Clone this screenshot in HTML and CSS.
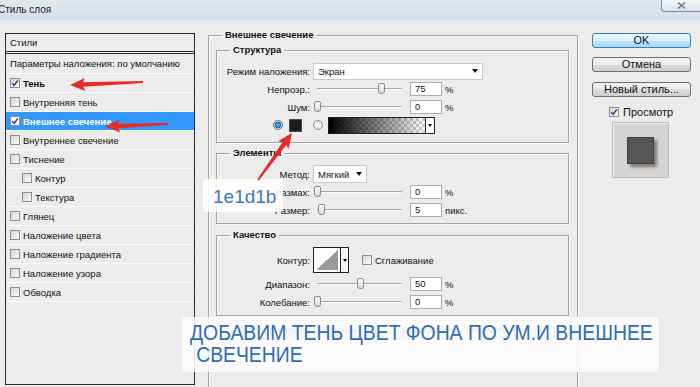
FILE: index.html
```html
<!DOCTYPE html>
<html lang="ru">
<head>
    <meta charset="UTF-8">
    <meta name="viewport" content="width=device-width, initial-scale=1.0">
    <title>Стиль слоя</title>
    <link rel="stylesheet" href="styles.css">
</head>
<body>

<div class="dialog">
    <div class="titlebar">
        <span class="title">Стиль слоя</span>
        <span class="close-btn">
            <svg viewBox="0 0 9 7"><path d="M1 0.5 8 6.5M8 0.5 1 6.5" stroke="#5f6a78" stroke-width="1.3" fill="none"/></svg>
        </span>
    </div>

    <div class="main">
        <!-- list of layer styles -->
        <div class="styles-list">
            <div class="list-head">Стили</div>
            <div class="list-row params">Параметры наложения: по умолчанию</div>
            <div class="list-row checked"><span class="cb"><svg viewBox="0 0 8 8"><path d="M1.2 4.2 3.2 6.3 6.9 1.4"/></svg></span>Тень</div>
            <div class="list-row"><span class="cb"></span>Внутренняя тень</div>
            <div class="list-row checked selected"><span class="cb"><svg viewBox="0 0 8 8"><path d="M1.2 4.2 3.2 6.3 6.9 1.4"/></svg></span>Внешнее свечение</div>
            <div class="list-row"><span class="cb"></span>Внутреннее свечение</div>
            <div class="list-row"><span class="cb"></span>Тиснение</div>
            <div class="list-row sub"><span class="cb"></span>Контур</div>
            <div class="list-row sub"><span class="cb"></span>Текстура</div>
            <div class="list-row"><span class="cb"></span>Глянец</div>
            <div class="list-row"><span class="cb"></span>Наложение цвета</div>
            <div class="list-row"><span class="cb"></span>Наложение градиента</div>
            <div class="list-row"><span class="cb"></span>Наложение узора</div>
            <div class="list-row"><span class="cb"></span>Обводка</div>
        </div>

        <!-- settings of the selected style -->
        <div class="settings">
            <fieldset class="group outer">
                <legend>Внешнее свечение</legend>

                <fieldset class="group">
                    <legend>Структура</legend>
                    <div class="row">
                        <span class="lbl">Режим наложения:</span>
                        <div class="select wide">Экран<i class="tri"></i></div>
                    </div>
                    <div class="row">
                        <span class="lbl">Непрозр.:</span>
                        <div class="slider"><span class="thumb" style="left: 75%"></span></div>
                        <span class="num">75</span><span class="unit">%</span>
                    </div>
                    <div class="row">
                        <span class="lbl">Шум:</span>
                        <div class="slider"><span class="thumb" style="left: 0%"></span></div>
                        <span class="num">0</span><span class="unit">%</span>
                    </div>
                    <div class="row color">
                        <span class="radio on"></span>
                        <span class="swatch"></span>
                        <span class="radio"></span>
                        <div class="grad"><span class="grad-fill"></span><span class="grad-drop"><i class="tri sm"></i></span></div>
                    </div>
                </fieldset>

                <fieldset class="group elements">
                    <legend>Элементы</legend>
                    <div class="row">
                        <span class="lbl">Метод:</span>
                        <div class="select short">Мягкий<i class="tri"></i></div>
                    </div>
                    <div class="row">
                        <span class="lbl">Размах:</span>
                        <div class="slider"><span class="thumb" style="left: 0%"></span></div>
                        <span class="num">0</span><span class="unit">%</span>
                    </div>
                    <div class="row">
                        <span class="lbl">Размер:</span>
                        <div class="slider"><span class="thumb" style="left: 5%"></span></div>
                        <span class="num">5</span><span class="unit">пикс.</span>
                    </div>
                </fieldset>

                <fieldset class="group quality">
                    <legend>Качество</legend>
                    <div class="row tall">
                        <span class="lbl">Контур:</span>
                        <div class="contour"><span class="contour-shape"></span><span class="contour-drop"><i class="tri sm"></i></span></div>
                        <label class="smooth"><span class="cb"></span>Сглаживание</label>
                    </div>
                    <div class="row">
                        <span class="lbl">Диапазон:</span>
                        <div class="slider"><span class="thumb" style="left: 50%"></span></div>
                        <span class="num">50</span><span class="unit">%</span>
                    </div>
                    <div class="row">
                        <span class="lbl">Колебание:</span>
                        <div class="slider"><span class="thumb" style="left: 0%"></span></div>
                        <span class="num">0</span><span class="unit">%</span>
                    </div>
                </fieldset>

                <div class="defaults">
                    <button class="ghost first">Использовать по умолчанию</button>
                    <button class="ghost second">Восстановить по умолчанию</button>
                </div>
            </fieldset>
        </div>

        <!-- dialog buttons -->
        <div class="side">
            <button class="btn primary">OK</button>
            <button class="btn cancel">Отмена</button>
            <button class="btn new-style">Новый стиль...</button>
            <label class="preview-check"><span class="cb"><svg viewBox="0 0 8 8"><path d="M1.2 4.2 3.2 6.3 6.9 1.4"/></svg></span>Просмотр</label>
            <div class="preview"><span class="preview-swatch"></span></div>
        </div>
    </div>

    <!-- annotations on top of the screenshot -->
    <div class="hex-note">1e1d1b</div>
    <div class="caption">
        <span>ДОБАВИМ ТЕНЬ ЦВЕТ ФОНА ПО УМ.И ВНЕШНЕЕ</span>
        <span class="indent">СВЕЧЕНИЕ</span>
    </div>
    <svg class="arrows" width="700" height="387" viewBox="0 0 700 387">
        <polygon transform="translate(143 82) rotate(177.6)" points="0,-1 60,-2.3 58,-6.5 73,0 58,6.5 60,2.3 0,1"/>
        <polygon transform="translate(168 124) rotate(177.7)" points="0,-1 50,-2.3 48,-6.5 63,0 48,6.5 50,2.3 0,1"/>
        <polygon transform="translate(258 180) rotate(-54.1)" points="0,-1 45,-2.3 43,-6.5 58,0 43,6.5 45,2.3 0,1"/>
    </svg>
</div>

</body>
</html>
```

FILE: styles.css
```css
* {
    box-sizing: border-box;
}
body {
    margin: 0;
    width: 700px;
    height: 387px;
    overflow: hidden;
    background-color: #ececec;
    font-family: "Liberation Sans", Arial, sans-serif;
    font-size: 9.5px;
    color: #111;
}
.dialog {
    position: relative;
    height: 387px;
    overflow: hidden;
}

/* title bar */
.titlebar {
    height: 20px;
    display: flex;
    align-items: flex-start;
    background: linear-gradient(#e0e8f1, #d5dfea);
}
.title {
    margin: 4px 0 0 -2px;
    font-size: 10px;
    line-height: 11px;
    color: #1b1b1b;
}
.close-btn {
    margin-left: auto;
    width: 39px;
    height: 12px;
    border: 1px solid #7f8b9a;
    border-top: 0;
    border-right: 0;
    border-radius: 0 0 0 4px;
    background: linear-gradient(#f3f6f9, #dbe2ea);
    display: flex;
    justify-content: center;
    align-items: center;
}
.close-btn svg {
    width: 9px;
    height: 7px;
}

.main {
    display: flex;
    align-items: flex-start;
    padding-top: 13px;
}

/* checkbox */
.cb {
    width: 10px;
    height: 10px;
    flex: none;
    border: 1px solid #8e8f8f;
    background: linear-gradient(135deg, #d6d6d6, #f9f9f9);
    display: flex;
    align-items: center;
    justify-content: center;
}
.cb svg {
    width: 8px;
    height: 8px;
}
.cb path {
    fill: none;
    stroke: #2f3f8c;
    stroke-width: 1.5;
}

/* styles list */
.styles-list {
    margin-left: 5px;
    width: 190px;
    height: 352px;
    border: 1px solid #2a2a2a;
    flex: none;
}
.list-head {
    height: 20px;
    padding-left: 4px;
    line-height: 17px;
    border-bottom: 3px double #2a2a2a;
}
.list-row {
    display: flex;
    align-items: center;
    gap: 3px;
    height: 19px;
    padding-left: 4px;
    border-bottom: 1px solid #fbfbfb;
    white-space: nowrap;
}
.list-row.params {
    height: 20px;
}
.list-row.sub {
    padding-left: 16px;
}
.list-row.checked {
    font-weight: bold;
}
.list-row.selected {
    background-color: #3399ff;
    color: #fff;
}
.list-row.selected .cb {
    background: #fff;
}

/* settings */
.settings {
    margin-left: 13px;
    margin-top: -4px;
    flex: none;
}
fieldset.group {
    margin: 0;
    min-width: 0;
    border: 1px solid #a5a5a5;
    box-shadow: inset 1px 1px 0 #fafafa, 1px 1px 0 #fafafa;
    padding: 6px 0 8px;
}
.group legend {
    padding: 0 3px;
    margin-left: 13px;
    font-weight: bold;
    line-height: 12px;
}
fieldset.outer {
    width: 370px;
    height: 358px;
    padding: 3px 8px 0 7px;
    border-bottom: 0;
}
.outer > legend {
    margin-left: 6px;
}
fieldset.elements {
    margin-top: 4px;
    padding-bottom: 4px;
}
fieldset.quality {
    margin-top: 5px;
    padding-bottom: 4px;
}

.row {
    display: flex;
    align-items: center;
    height: 18px;
}
.row.tall {
    height: 26px;
    margin-bottom: 2px;
}
.row.color {
    padding-left: 56px;
}
.lbl {
    width: 93px;
    margin-right: 3px;
    text-align: right;
    flex: none;
    white-space: nowrap;
}
.select {
    height: 17px;
    background: #fff;
    border: 1px solid #c9c9c9;
    display: flex;
    align-items: center;
    justify-content: space-between;
    padding: 0 4px;
}
.select.wide {
    width: 170px;
}
.select.short {
    width: 54px;
    height: 18px;
}
.tri {
    width: 0;
    height: 0;
    border-left: 3.5px solid transparent;
    border-right: 3.5px solid transparent;
    border-top: 4px solid #111;
}
.tri.sm {
    border-left-width: 2.5px;
    border-right-width: 2.5px;
    border-top-width: 3px;
}
.slider {
    position: relative;
    width: 85px;
    height: 2px;
    margin: 0 8px 0 4px;
    border-top: 1px solid #a6a6a6;
    border-bottom: 1px solid #fdfdfd;
    flex: none;
}
.thumb {
    position: absolute;
    top: -6px;
    width: 7px;
    height: 11px;
    margin-left: -3px;
    border: 1px solid #8b8b8b;
    border-radius: 2px 2px 3px 3px;
    background: linear-gradient(#fdfdfd, #d9d9d9);
}
.num {
    width: 32px;
    height: 14px;
    border: 1px solid #abadb3;
    background: #fff;
    padding-left: 4px;
    line-height: 12px;
    flex: none;
}
.unit {
    margin-left: 3px;
}

.radio {
    width: 10px;
    height: 10px;
    border-radius: 50%;
    border: 1px solid #8e8f8f;
    background: radial-gradient(circle, #fdfdfd, #d8d8d8);
    flex: none;
    margin-right: 5px;
}
.radio.on {
    margin-right: 6px;
    border-color: #5a6f87;
    background: radial-gradient(circle, #59c2fb 0, #1c7ccc 2.5px, #114d88 3px, #e9e9e9 3.6px);
}
.swatch {
    width: 13px;
    height: 13px;
    margin-right: 11px;
    background: #1e1d1b;
    border: 1px solid #4a4a4a;
    flex: none;
}
.grad {
    width: 107px;
    height: 17px;
    border: 1px solid #222;
    display: flex;
}
.grad-fill {
    flex: 1;
    background: linear-gradient(to right, #000, rgba(0, 0, 0, 0)),
                repeating-conic-gradient(#cfcfcf 0 25%, #fff 0 50%) 0 0 / 6px 6px;
}
.grad-drop {
    width: 9px;
    border-left: 1px solid #222;
    background: #fff;
    display: flex;
    align-items: center;
    justify-content: center;
}

.contour {
    width: 36px;
    height: 26px;
    border: 1px solid #222;
    display: flex;
    background: #fff;
}
.contour-shape {
    flex: 1;
    margin: 2px;
    background: linear-gradient(to bottom right, #fff 50%, #9a9a9a 50%);
}
.contour-drop {
    width: 8px;
    border-left: 1px solid #222;
    background: #f3f3f3;
    display: flex;
    align-items: center;
    justify-content: center;
}
.smooth {
    margin-left: 13px;
    display: flex;
    align-items: center;
    gap: 3px;
}

.defaults {
    display: flex;
    gap: 6px;
    margin: 4px 0 0 14px;
}
.ghost {
    height: 18px;
    padding: 0;
    border: 1px solid #adadad;
    border-radius: 3px;
    background: linear-gradient(#f6f6f6, #e1e1e1);
    font: inherit;
    color: #555;
}
.ghost.first {
    width: 139px;
}
.ghost.second {
    width: 180px;
}

/* right column */
.side {
    margin-left: 14px;
    width: 99px;
    display: flex;
    flex-direction: column;
    flex: none;
}
.btn {
    height: 15px;
    padding: 0;
    border: 1px solid #707070;
    border-radius: 3px;
    background: linear-gradient(#f2f2f2, #ebebeb 50%, #dddddd 50%, #cfcfcf);
    font-family: "Liberation Sans", Arial, sans-serif;
    font-size: 11px;
    line-height: 13px;
    color: #111;
}
.btn.primary {
    border-color: #3c7fb1;
    background: linear-gradient(#eaf6fd, #d9f0fc 50%, #bee6fd 50%, #a7d9f5);
}
.btn.cancel {
    margin-top: 9px;
}
.btn.new-style {
    margin-top: 10px;
}
.preview-check {
    display: flex;
    align-items: center;
    gap: 4px;
    height: 13px;
    margin: 8px 0 0 17px;
    font-size: 11px;
}
.preview {
    width: 57px;
    height: 56px;
    margin: 4px 0 0 20px;
    background: #d5d5d5;
    border: 1px solid #bcbcbc;
    box-shadow: inset 1px 1px 0 #ececec;
    display: flex;
    align-items: center;
    justify-content: center;
}
.preview-swatch {
    width: 27px;
    height: 27px;
    background: #555;
    border: 1px solid #3f3f3f;
    box-shadow: 3px 3px 3px rgba(70, 50, 30, 0.55);
}

/* annotations */
.hex-note {
    position: absolute;
    left: 203px;
    top: 179px;
    width: 80px;
    height: 33px;
    padding-left: 10px;
    border-radius: 3px;
    background: rgba(255, 255, 255, 0.86);
    color: #3b78c2;
    font-size: 19px;
    line-height: 35px;
}
.caption {
    position: absolute;
    left: 182px;
    top: 317px;
    width: 477px;
    height: 55px;
    padding: 5px 0 0 8px;
    border-radius: 4px;
    background: rgba(253, 253, 253, 0.88);
    color: #2e6db4;
    font-size: 22px;
    line-height: 22px;
}
.caption span {
    display: block;
    white-space: nowrap;
    transform: scaleX(0.88);
    transform-origin: left;
}
.caption .indent {
    padding-left: 7px;
}
.arrows {
    position: absolute;
    left: 0;
    top: 0;
    pointer-events: none;
    fill: #e42d27;
}
```
